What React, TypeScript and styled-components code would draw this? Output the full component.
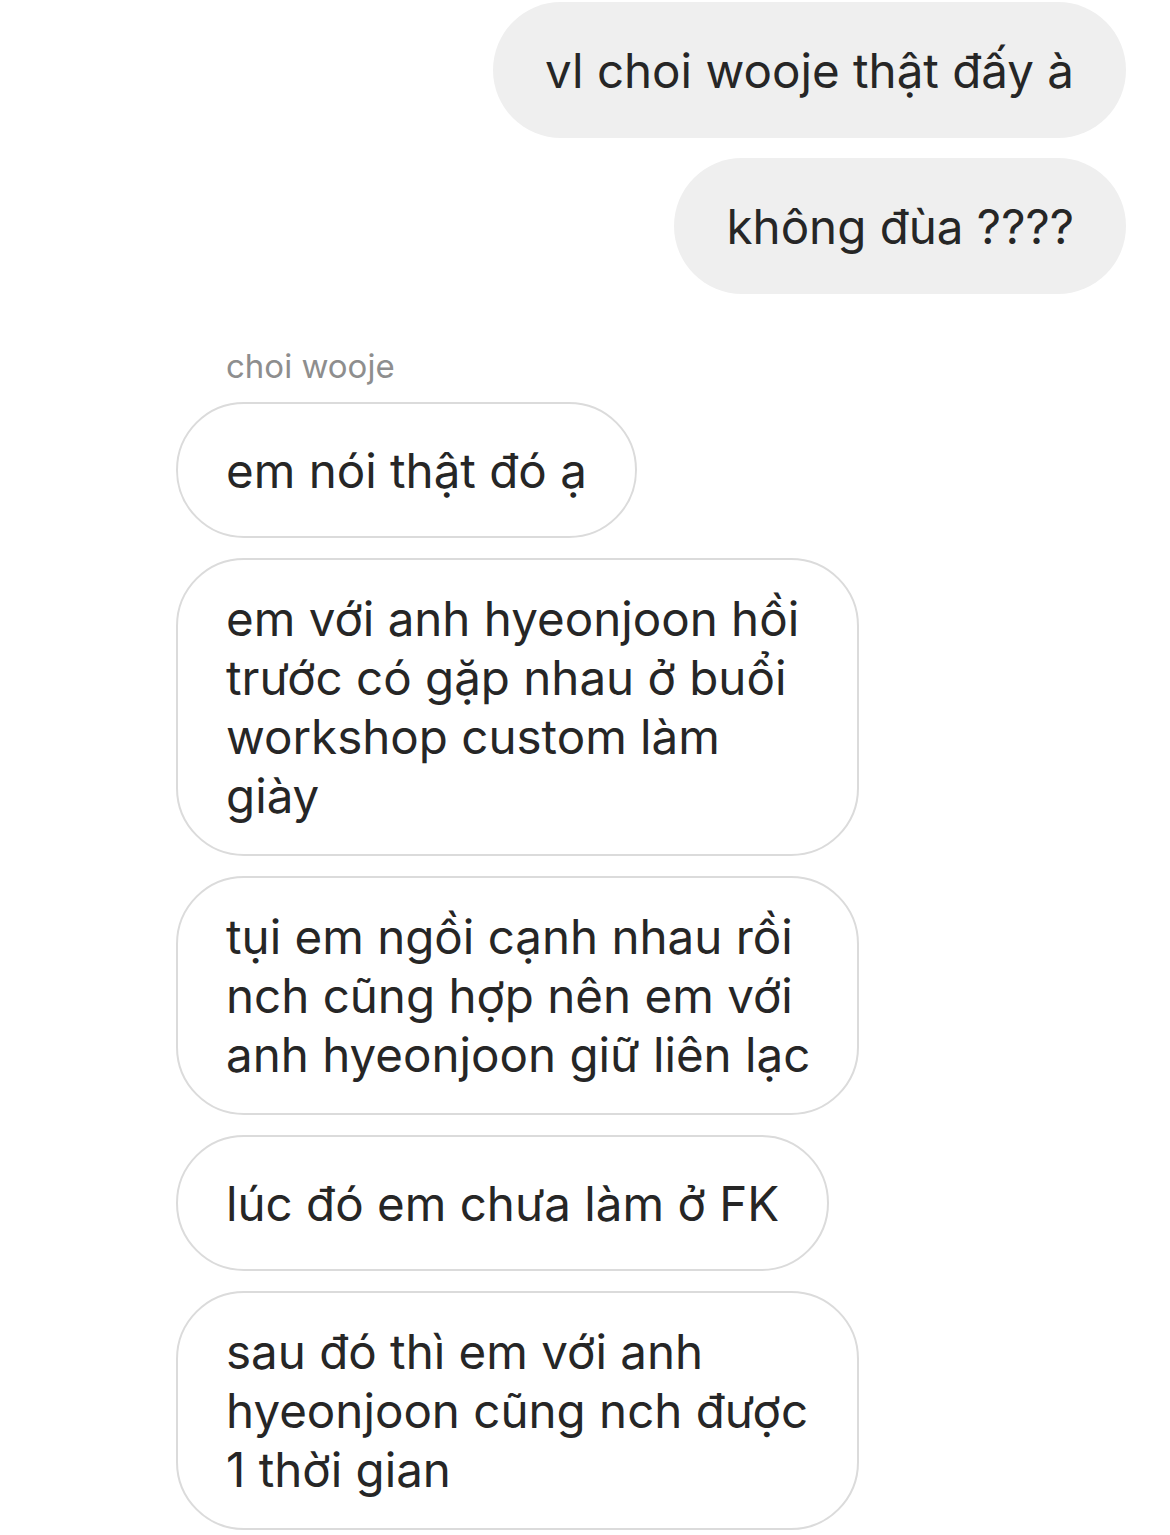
import React from "react";
import styled, { createGlobalStyle } from "styled-components";

const GlobalStyle = createGlobalStyle`
  html, body {
    margin: 0;
    padding: 0;
    background: #ffffff;
  }
  body {
    font-family: Inter, "Noto Sans", "Liberation Sans", sans-serif;
    color: #262626;
  }
`;

const Thread = styled.div`
  width: 1170px;
  box-sizing: border-box;
  padding: 2px 44px 0 176px;
  display: flex;
  flex-direction: column;
  gap: 20px;
`;

const SentRow = styled.div`
  display: flex;
  justify-content: flex-end;
`;

const ReceivedRow = styled.div`
  display: flex;
  justify-content: flex-start;
`;

const SenderName = styled.div`
  margin: 33px 0 -3px 50px;
  font-size: 33px;
  line-height: 38px;
  color: #8e8e8e;
`;

const Bubble = styled.div<{ $sent?: boolean; $wide?: boolean }>`
  box-sizing: border-box;
  min-height: 136px;
  ${(p) => (p.$wide ? "width: 683px;" : "")}
  display: flex;
  flex-direction: column;
  justify-content: center;
  padding: 29px ${(p) => (p.$sent ? "52px" : "48px")};
  border-radius: 68px;
  background: ${(p) => (p.$sent ? "#efefef" : "#ffffff")};
  border: ${(p) => (p.$sent ? "none" : "2px solid #dbdbdb")};
  font-size: 47.5px;
  line-height: 59px;
  white-space: nowrap;
  color: #262626;
`;

const Line = styled.span`
  display: block;
`;

type Msg = { lines: string[] };

const sent: Msg[] = [
  { lines: ["vl choi wooje thật đấy à"] },
  { lines: ["không đùa ????"] },
];

const received: Msg[] = [
  { lines: ["em nói thật đó ạ"] },
  {
    lines: [
      "em với anh hyeonjoon hồi",
      "trước có gặp nhau ở buổi",
      "workshop custom làm",
      "giày",
    ],
  },
  {
    lines: [
      "tụi em ngồi cạnh nhau rồi",
      "nch cũng hợp nên em với",
      "anh hyeonjoon giữ liên lạc",
    ],
  },
  { lines: ["lúc đó em chưa làm ở FK"] },
  {
    lines: ["sau đó thì em với anh", "hyeonjoon cũng nch được", "1 thời gian"],
  },
];

export default function App() {
  return (
    <>
      <GlobalStyle />
      <Thread>
        {sent.map((m, i) => (
          <SentRow key={`s${i}`}>
            <Bubble $sent>
              {m.lines.map((l, j) => (
                <Line key={j}>{l}</Line>
              ))}
            </Bubble>
          </SentRow>
        ))}
        <SenderName>choi wooje</SenderName>
        {received.map((m, i) => (
          <ReceivedRow key={`r${i}`}>
            <Bubble $wide={m.lines.length > 1}>
              {m.lines.map((l, j) => (
                <Line key={j}>{l}</Line>
              ))}
            </Bubble>
          </ReceivedRow>
        ))}
      </Thread>
    </>
  );
}
